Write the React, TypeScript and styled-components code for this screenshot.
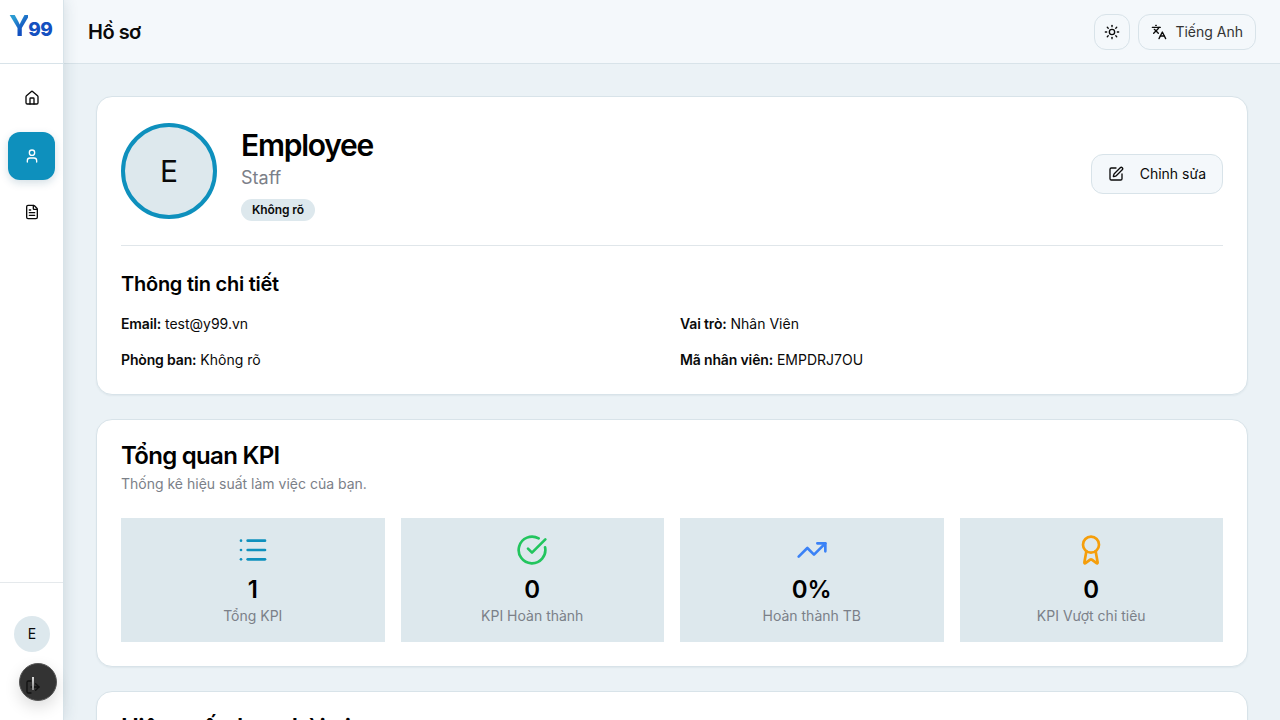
import styled, { createGlobalStyle } from 'styled-components';
import {
  Award,
  CircleCheckBig,
  FileText,
  House,
  Languages,
  List,
  LogOut,
  SquarePen,
  Sun,
  TrendingUp,
  User,
} from 'lucide-react';

const GlobalStyle = createGlobalStyle`
  * {
    box-sizing: border-box;
  }

  html,
  body {
    margin: 0;
    height: 100%;
    overflow: hidden;
  }

  body {
    font-family: Inter, 'Noto Sans', sans-serif;
    color: #0a0a0a;
    background: #ebf2f6;
  }
`;

const details = [
  { label: 'Email:', value: 'test@y99.vn' },
  { label: 'Vai trò:', value: 'Nhân Viên' },
  { label: 'Phòng ban:', value: 'Không rõ' },
  { label: 'Mã nhân viên:', value: 'EMPDRJ7OU' },
];

const stats = [
  { icon: List, color: '#0e90bd', value: '1', label: 'Tổng KPI' },
  { icon: CircleCheckBig, color: '#22c55e', value: '0', label: 'KPI Hoàn thành' },
  { icon: TrendingUp, color: '#3b82f6', value: '0%', label: 'Hoàn thành TB' },
  { icon: Award, color: '#f59e0b', value: '0', label: 'KPI Vượt chỉ tiêu' },
];

function App() {
  return (
    <Page>
      <GlobalStyle />
      <Sidebar>
        <LogoBar>
          <Logo>
            <LogoY>Y</LogoY>
            <LogoNum>99</LogoNum>
          </Logo>
        </LogoBar>
        <Nav>
          <NavItem>
            <House size={16} />
          </NavItem>
          <NavItem $active>
            <User size={16} />
          </NavItem>
          <NavItem>
            <FileText size={16} />
          </NavItem>
        </Nav>
        <SidebarFooter>
          <SmallAvatar>E</SmallAvatar>
        </SidebarFooter>
        <FloatingButton>
          <FloatingLine />
          <LogOut size={16} />
        </FloatingButton>
      </Sidebar>
      <Column>
        <Header>
          <PageTitle>Hồ sơ</PageTitle>
          <HeaderActions>
            <OutlineButton $square>
              <Sun size={16} />
            </OutlineButton>
            <OutlineButton>
              <Languages size={16} />
              Tiếng Anh
            </OutlineButton>
          </HeaderActions>
        </Header>
        <Main>
          <Card>
            <ProfileRow>
              <BigAvatar>E</BigAvatar>
              <ProfileText>
                <Name>Employee</Name>
                <Position>Staff</Position>
                <Badge>Không rõ</Badge>
              </ProfileText>
              <EditButton>
                <SquarePen size={16} />
                Chỉnh sửa
              </EditButton>
            </ProfileRow>
            <Divider />
            <SectionTitle>Thông tin chi tiết</SectionTitle>
            <DetailGrid>
              {details.map((item) => (
                <DetailText key={item.label}>
                  <b>{item.label}</b> {item.value}
                </DetailText>
              ))}
            </DetailGrid>
          </Card>
          <Card>
            <CardTitle>Tổng quan KPI</CardTitle>
            <CardDesc>Thống kê hiệu suất làm việc của bạn.</CardDesc>
            <StatGrid>
              {stats.map((stat) => (
                <Stat key={stat.label}>
                  <stat.icon size={32} color={stat.color} />
                  <StatValue>{stat.value}</StatValue>
                  <StatLabel>{stat.label}</StatLabel>
                </Stat>
              ))}
            </StatGrid>
          </Card>
          <Card>
            <CardTitle>Hiệu suất theo thời gian</CardTitle>
          </Card>
        </Main>
      </Column>
    </Page>
  );
}

const Page = styled.div`
  width: 1280px;
  height: 720px;
  display: flex;
  overflow: hidden;
`;

const Sidebar = styled.aside`
  position: relative;
  z-index: 2;
  width: 64px;
  height: 720px;
  flex-shrink: 0;

  display: flex;
  flex-direction: column;

  background: #fff;
  border-right: 1px solid #d8e3e9;
  box-shadow: 0 0 14px rgba(40, 70, 90, 0.16);
`;

const LogoBar = styled.div`
  height: 64px;
  flex-shrink: 0;
  padding: 11px 0 0 9px;
  border-bottom: 1px solid #d8e3e9;
`;

const Logo = styled.div`
  display: flex;
  align-items: baseline;
  height: 30px;
  font-family: Inter, sans-serif;
  font-weight: 800;
`;

const LogoY = styled.span`
  font-size: 29px;
  line-height: 30px;
  font-weight: 700;
  letter-spacing: -2px;
  color: transparent;
  background: linear-gradient(135deg, #2a9ad2 25%, #124fc0 65%);
  background-clip: text;
  -webkit-background-clip: text;
`;

const LogoNum = styled.span`
  font-size: 19px;
  line-height: 20px;
  letter-spacing: -0.5px;
  color: #1450c0;
`;

const Nav = styled.nav`
  flex: 1;
  padding: 10px 8px 0;
  display: flex;
  flex-direction: column;
  gap: 8px;
`;

const NavItem = styled.div<{ $active?: boolean }>`
  height: 48px;
  margin-top: ${(p) => (p.$active ? '2px' : '0')};
  border-radius: 12px;

  display: flex;
  align-items: center;
  justify-content: center;

  color: ${(p) => (p.$active ? '#fff' : '#0a0a0a')};
  background: ${(p) => (p.$active ? '#0e90bd' : 'transparent')};
  box-shadow: ${(p) => (p.$active ? '0 3px 8px rgba(14, 80, 110, 0.18)' : 'none')};
`;

const SidebarFooter = styled.div`
  height: 138px;
  padding-top: 33px;
  padding-left: 14px;
  border-top: 1px solid #e5e9ec;
`;

const SmallAvatar = styled.div`
  width: 36px;
  height: 36px;
  border-radius: 50%;

  display: flex;
  align-items: center;
  justify-content: center;

  font-size: 14px;
  line-height: 20px;
  background: #dde8ed;
`;

const FloatingButton = styled.div`
  position: absolute;
  left: 19px;
  top: 663px;
  width: 38px;
  height: 38px;
  border-radius: 50%;

  display: flex;
  align-items: center;
  justify-content: center;

  color: #111;
  background: #333;
  border: 1px solid #555;
  box-shadow: 0 6px 16px rgba(0, 0, 0, 0.14);

  svg {
    margin: 10px 0 0 -11px;
  }
`;

const FloatingLine = styled.span`
  position: absolute;
  left: 12px;
  top: 13px;
  width: 2px;
  height: 13px;
  background: linear-gradient(#ddd, #888);
`;

const Column = styled.div`
  flex: 1;
  min-width: 0;
  display: flex;
  flex-direction: column;
`;

const Header = styled.header`
  height: 64px;
  flex-shrink: 0;
  padding: 1px 24px 0;

  display: flex;
  align-items: center;
  justify-content: space-between;

  background: #f4f8fb;
  border-bottom: 1px solid #d8e3e9;
`;

const PageTitle = styled.h1`
  margin: 0;
  font-size: 20px;
  font-weight: 600;
  letter-spacing: -0.5px;
`;

const HeaderActions = styled.div`
  display: flex;
  gap: 8px;
`;

const OutlineButton = styled.div<{ $square?: boolean }>`
  height: 36px;
  width: ${(p) => (p.$square ? '36px' : 'auto')};
  padding: ${(p) => (p.$square ? '0' : '0 12px')};
  border-radius: 12px;

  display: flex;
  align-items: center;
  justify-content: center;
  gap: 8px;

  font-size: 14px;
  line-height: 20px;
  color: #333;
  background: #f4f8fb;
  border: 1px solid #d8e3e9;

  svg {
    color: #0a0a0a;
  }
`;

const Main = styled.main`
  flex: 1;
  min-height: 0;
  overflow: hidden;
  padding: 32px 32px 0;

  display: flex;
  flex-direction: column;
  gap: 24px;
`;

const Card = styled.section`
  flex-shrink: 0;
  padding: 24px;
  border-radius: 16px;

  background: #fff;
  border: 1px solid #d8e3e9;
  box-shadow: 0 1px 2px rgba(30, 60, 80, 0.06);
`;

const ProfileRow = styled.div`
  height: 100px;
  display: flex;
  align-items: center;
  gap: 24px;
`;

const BigAvatar = styled.div`
  width: 96px;
  height: 96px;
  border-radius: 50%;
  flex-shrink: 0;

  display: flex;
  align-items: center;
  justify-content: center;

  font-size: 30px;
  background: #dde8ed;
  border: 4px solid #0e90bd;
`;

const ProfileText = styled.div`
  flex: 1;
  padding-top: 6px;
  display: flex;
  flex-direction: column;
  align-items: flex-start;
`;

const Name = styled.h2`
  margin: 0;
  font-size: 30px;
  line-height: 36px;
  font-weight: 600;
  letter-spacing: -1.25px;
  color: #000;
`;

const Position = styled.p`
  margin: 1px 0 7px;
  font-size: 18px;
  line-height: 28px;
  color: #7b8088;
`;

const Badge = styled.span`
  height: 22px;
  padding: 0 11px;
  border-radius: 11px;

  display: flex;
  align-items: center;

  font-size: 12px;
  line-height: 16px;
  font-weight: 600;
  letter-spacing: -0.1px;
  background: #dde8ed;
`;

const EditButton = styled.div`
  height: 40px;
  margin-top: 6px;
  padding: 0 16px;
  border-radius: 12px;

  display: flex;
  align-items: center;
  gap: 16px;

  font-size: 14px;
  line-height: 20px;
  background: #f4f8fb;
  border: 1px solid #d8e3e9;
`;

const Divider = styled.hr`
  margin: 24px 0;
  border: 0;
  border-top: 1px solid #e0e6ea;
`;

const SectionTitle = styled.h3`
  margin: 0 0 16px;
  font-size: 20px;
  line-height: 28px;
  font-weight: 600;
  letter-spacing: -0.25px;
  color: #000;
`;

const DetailGrid = styled.div`
  display: grid;
  grid-template-columns: repeat(2, 1fr);
  column-gap: 16px;
  row-gap: 16px;
`;

const DetailText = styled.p`
  margin: 0;
  font-size: 14px;
  line-height: 20px;

  b {
    font-weight: 600;
    letter-spacing: -0.15px;
  }
`;

const CardTitle = styled.h2`
  margin: 0;
  font-size: 24px;
  line-height: 24px;
  font-weight: 600;
  letter-spacing: -0.7px;
  color: #000;
`;

const CardDesc = styled.p`
  margin: 6px 0 24px;
  font-size: 14px;
  line-height: 20px;
  color: #7b8088;
`;

const StatGrid = styled.div`
  display: grid;
  grid-template-columns: repeat(4, 1fr);
  gap: 16px;
`;

const Stat = styled.div`
  height: 124px;
  padding-top: 16px;

  display: flex;
  flex-direction: column;
  align-items: center;

  background: #dde8ed;
`;

const StatValue = styled.div`
  margin-top: 8px;
  font-size: 24px;
  line-height: 32px;
  font-weight: 600;
  color: #000;
`;

const StatLabel = styled.div`
  margin-top: 0;
  font-size: 14px;
  line-height: 20px;
  color: #7b8088;
`;

export default App;
